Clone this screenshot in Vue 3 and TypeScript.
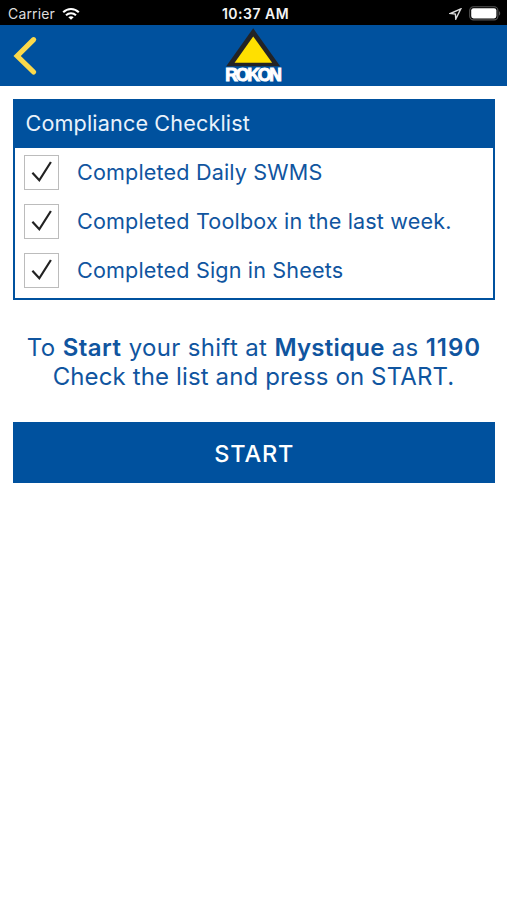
<script setup lang="ts">
import { ref } from 'vue'

interface CheckItem {
  label: string
  done: boolean
}

const site = 'Mystique'
const unit = '1190'
const items = ref<CheckItem[]>([
  { label: 'Completed Daily SWMS', done: true },
  { label: 'Completed Toolbox in the last week.', done: true },
  { label: 'Completed Sign in Sheets', done: true },
])
</script>

<template>
  <main class="screen">
    <div class="status">
      <div class="side">
        <span class="carrier">Carrier</span>
        <svg class="wifi" width="18" height="14" viewBox="0 0 18 14">
          <path d="M1.2 5.2C5.6.9 12.4.9 16.8 5.2" />
          <path d="M4 8.2c2.9-2.7 7.1-2.7 10 0" />
          <path class="dot" d="M9 12.7 6.3 10.2c1.5-1.4 3.9-1.4 5.4 0z" />
        </svg>
      </div>
      <span class="time">10:37 AM</span>
      <div class="side right">
        <svg class="arrow" width="13" height="12" viewBox="0 0 13 12">
          <path d="M11.8 .9 1.4 5.5l5 .6.4 4.9z" />
        </svg>
        <svg width="32" height="15" viewBox="0 0 32 15">
          <rect x=".7" y=".7" width="28.2" height="13.2" rx="3.8" fill="none" stroke="#555" stroke-width="1.1" />
          <rect x="2.2" y="2.2" width="25.2" height="10.2" rx="2.3" fill="#fff" />
          <path d="M30 5.2c1.6.5 1.6 3.7 0 4.2z" fill="#555" />
        </svg>
      </div>
    </div>

    <header class="nav">
      <button class="back" type="button" aria-label="Back">
        <svg width="26" height="40" viewBox="0 0 26 40">
          <path d="M20.6 3.7 4.2 20l16.4 16" />
        </svg>
      </button>
      <div class="logo">
        <svg width="56" height="39" viewBox="0 0 56 39">
          <path d="M28.2 .3 55.2 38.3H1.2z" fill="#222326" />
          <path d="M28.2 8.4 47.1 34.7H9.6z" fill="#ffe000" />
        </svg>
        <span class="brand">ROKON</span>
      </div>
    </header>

    <section class="card">
      <h1 class="card-title">Compliance Checklist</h1>
      <ul class="list">
        <li v-for="item in items" :key="item.label">
          <button class="row" type="button" @click="item.done = !item.done">
            <span class="box">
              <svg v-if="item.done" width="24" height="24" viewBox="0 0 24 24">
                <path d="M2.4 12.7 9.3 20.3 20.9 2" />
              </svg>
            </span>
            <span class="label">{{ item.label }}</span>
          </button>
        </li>
      </ul>
    </section>

    <p class="message">
      <span class="line first">To <b>Start</b> your shift at <b class="site">{{ site }}</b> as <b class="unit">{{ unit }}</b></span>
      <span class="line second">Check the list and press on START.</span>
    </p>

    <button class="start" type="button">START</button>
  </main>
</template>

<style>
body {
  background: #fff;
}
</style>

<style scoped>
.screen {
  height: 900px;
  box-sizing: border-box;
  font-family: Inter, "Liberation Sans", sans-serif;
  color: #10559f;
}
button {
  border: 0;
  padding: 0;
  margin: 0;
  background: none;
  font: inherit;
  color: inherit;
}
.status {
  height: 25px;
  background: #000;
  color: #f4f4f4;
  display: grid;
  grid-template-columns: 1fr auto 1fr;
  align-items: center;
  padding: 2px 6px 0 8px;
  box-sizing: border-box;
}
.side {
  display: flex;
  align-items: center;
  gap: 7px;
}
.right {
  justify-content: flex-end;
}
.carrier {
  font-size: 14px;
  line-height: 23px;
  color: #ddd;
  letter-spacing: 0.15px;
}
.time {
  font-size: 14px;
  font-weight: 600;
  letter-spacing: 0.5px;
  padding-left: 2px;
}
.wifi path {
  fill: none;
  stroke: #fff;
  stroke-width: 2.1;
}
.wifi .dot {
  fill: #fff;
  stroke: none;
}
.arrow path {
  fill: none;
  stroke: #ddd;
  stroke-width: 1.4;
}
.nav {
  height: 61px;
  background: #00519e;
  display: grid;
  grid-template-columns: 1fr auto 1fr;
  align-items: start;
}
.back {
  justify-self: start;
  padding: 11px 0 0 13px;
}
.back svg {
  display: block;
}
.back path {
  fill: none;
  stroke: #fbd94b;
  stroke-width: 5.2;
  stroke-linecap: round;
}
.logo {
  display: flex;
  flex-direction: column;
  align-items: center;
  padding-top: 3px;
}
.brand {
  margin: 0 2px 0 0;
  font: 700 17.5px/16px "Liberation Sans", Arial, sans-serif;
  letter-spacing: -2.1px;
  color: #fff;
  -webkit-text-stroke: 1px #fff;
}
.card {
  margin: 12.5px 12.5px 0 13px;
  border: 2.5px solid #00519e;
  border-top: 0;
}
.card-title {
  margin: 0;
  height: 49px;
  padding-left: 10.5px;
  background: #00519e;
  color: #e9f2fb;
  font-size: 21.6px;
  font-weight: 400;
  line-height: 49px;
  letter-spacing: 0.15px;
}
.list {
  list-style: none;
  margin: 0;
  padding: 7px 0 10px 9px;
  display: grid;
  gap: 14px;
}
.row {
  display: flex;
  align-items: center;
  gap: 18px;
  height: 35px;
}
.box {
  width: 35px;
  height: 35px;
  box-sizing: border-box;
  border: 1px solid #bcbcbc;
  display: grid;
  place-items: center;
  background: #fff;
}
.box path {
  fill: none;
  stroke: #222;
  stroke-width: 2.2;
}
.label {
  font-size: 21.6px;
  line-height: 34px;
  padding-bottom: 1px;
  letter-spacing: 0.15px;
}
.message {
  margin: 33px 0 0;
  font-size: 24px;
  line-height: 29.5px;
  text-align: center;
}
.line {
  display: block;
  white-space: nowrap;
}
.first {
  letter-spacing: 0.35px;
  padding-left: 1px;
}
.second {
  letter-spacing: 0.13px;
}
.message b {
  font-weight: 600;
  letter-spacing: 0.5px;
}
.message .site {
  letter-spacing: 0.25px;
}
.message .unit {
  letter-spacing: 1px;
}
.start {
  display: block;
  width: calc(100% - 25.5px);
  height: 61px;
  margin: 30px 12.5px 0 13px;
  padding: 2px 0 0 1px;
  background: #00519e;
  color: #fff;
  font-size: 23.5px;
  font-weight: 550;
  letter-spacing: 0.9px;
}
</style>
